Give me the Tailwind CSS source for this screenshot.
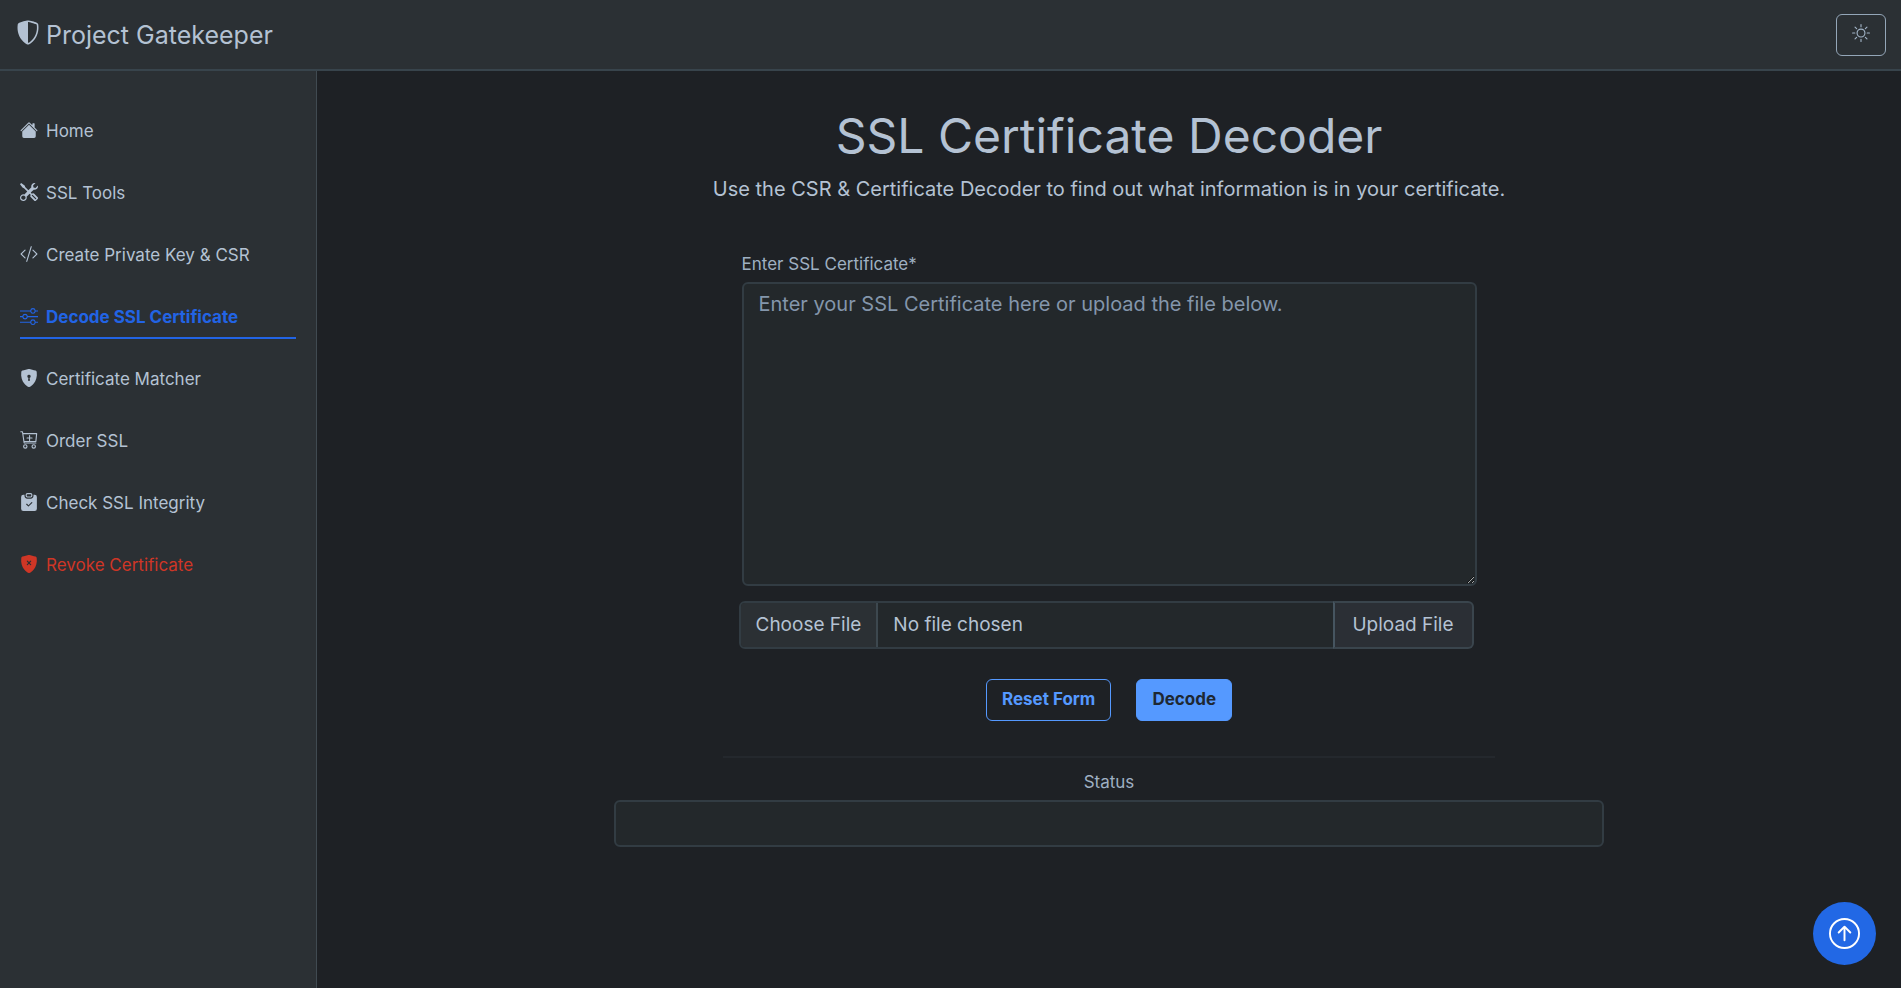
<!DOCTYPE html>
<html lang="en">
<head>
<meta charset="utf-8">
<meta name="viewport" content="width=device-width, initial-scale=1">
<title>Project Gatekeeper</title>
<script src="https://cdn.jsdelivr.net/npm/@tailwindcss/browser@4"></script>
</head>
<body class="flex min-h-screen flex-col bg-[#1e2125] font-['Inter',sans-serif] text-[#b4c2d3]">
<header class="flex h-[71px] items-center justify-between border-b-2 border-[#38444c] bg-[#2b3034] pr-[15px] pl-4">
  <a href="#" class="flex items-center gap-1.5 text-[25px] leading-8">
    <svg class="mb-1 h-[25px] w-6" viewBox="0 0 16 16" fill="currentColor"><path d="M8 14.933a.615.615 0 0 0 .1-.025c.076-.023.174-.061.294-.118.24-.113.547-.29.893-.533a10.726 10.726 0 0 0 2.287-2.233c1.527-1.997 2.807-5.031 2.253-9.188a.48.48 0 0 0-.328-.39c-.651-.213-1.75-.56-2.837-.855C9.552 1.29 8.531 1.067 8 1.067v13.866zM5.072.56C6.157.265 7.31 0 8 0s1.843.265 2.928.56c1.11.3 2.229.655 2.887.87a1.540 1.540 0 0 1 1.044 1.262c.596 4.477-.787 7.795-2.465 9.990a11.775 11.775 0 0 1-2.517 2.453 7.159 7.159 0 0 1-1.048.625c-.28.132-.581.24-.829.24s-.548-.108-.829-.24a7.158 7.158 0 0 1-1.048-.625 11.777 11.777 0 0 1-2.517-2.453C1.928 10.487.545 7.169 1.141 2.692A1.540 1.540 0 0 1 2.185 1.430 62.456 62.456 0 0 1 5.072.560z"/></svg>
    Project Gatekeeper
  </a>
  <button type="button" aria-label="Toggle theme" class="flex h-[42px] w-[50px] items-center justify-center rounded-md border border-[#94a6b8] pb-1 text-[#a3b5c8]">
    <svg class="size-[18px]" viewBox="0 0 16 16" fill="currentColor"><path d="M8 11a3 3 0 1 1 0-6 3 3 0 0 1 0 6zm0 1a4 4 0 1 0 0-8 4 4 0 0 0 0 8zM8 0a.5.5 0 0 1 .5.5v2a.5.5 0 0 1-1 0v-2A.5.5 0 0 1 8 0zm0 13a.5.5 0 0 1 .5.5v2a.5.5 0 0 1-1 0v-2A.5.5 0 0 1 8 13zm8-5a.5.5 0 0 1-.5.5h-2a.5.5 0 0 1 0-1h2a.5.5 0 0 1 .5.5zM3 8a.5.5 0 0 1-.5.5h-2a.5.5 0 0 1 0-1h2A.5.5 0 0 1 3 8zm10.657-5.657a.5.5 0 0 1 0 .707l-1.414 1.415a.5.5 0 1 1-.707-.708l1.414-1.414a.5.5 0 0 1 .707 0zm-9.193 9.193a.5.5 0 0 1 0 .707L3.050 13.657a.5.5 0 0 1-.707-.707l1.414-1.414a.5.5 0 0 1 .707 0zm9.193 2.121a.5.5 0 0 1-.707 0l-1.414-1.414a.5.5 0 0 1 .707-.707l1.414 1.414a.5.5 0 0 1 0 .707zM4.464 4.465a.5.5 0 0 1-.707 0L2.343 3.050a.5.5 0 1 1 .707-.707l1.414 1.414a.5.5 0 0 1 0 .708z"/></svg>
  </button>
</header>
<div class="flex flex-1">
  <nav class="flex w-[317px] shrink-0 flex-col gap-5 border-r border-[#404a51] bg-[#2b3034] px-5 pt-10 text-[17px] leading-6">
    <a href="#" class="flex h-[42px] items-center gap-2 border-b-2 border-transparent">
      <svg class="mb-0.5 size-[18px]" viewBox="0 0 16 16" fill="currentColor"><path d="M8.707 1.500a1 1 0 0 0-1.414 0L.646 8.146a.5.5 0 0 0 .708.708L8 2.207l6.646 6.647a.5.5 0 0 0 .708-.708L13 5.793V2.500a.5.5 0 0 0-.5-.5h-1a.5.5 0 0 0-.5.5v1.293L8.707 1.500Z"/><path d="m8 3.293 6 6V13.500a1.500 1.500 0 0 1-1.500 1.500h-9A1.500 1.500 0 0 1 2 13.500V9.293l6-6Z"/></svg>
      Home</a>
    <a href="#" class="flex h-[42px] items-center gap-2 border-b-2 border-transparent">
      <svg class="mb-0.5 size-[18px]" viewBox="0 0 16 16" fill="currentColor"><path d="M1 0 0 1l2.200 3.081a1 1 0 0 0 .815.419h.070a1 1 0 0 1 .708.293l2.675 2.675-2.617 2.654A3.003 3.003 0 0 0 0 13a3 3 0 1 0 5.878-.851l2.654-2.617.968.968-.305.914a1 1 0 0 0 .242 1.023l3.270 3.270a.997.997 0 0 0 1.414 0l1.586-1.586a.997.997 0 0 0 0-1.414l-3.270-3.270a1 1 0 0 0-1.023-.242L10.500 9.500l-.960-.960 2.680-2.643A3.005 3.005 0 0 0 16 3c0-.269-.035-.530-.102-.777l-2.140 2.141L12 4l-.364-1.757L13.777.102a3 3 0 0 0-3.675 3.680L7.462 6.460 4.793 3.793a1 1 0 0 1-.293-.707v-.071a1 1 0 0 0-.419-.814L1 0Zm9.646 10.646a.5.5 0 0 1 .708 0l2.914 2.915a.5.5 0 0 1-.707.707l-2.915-2.914a.5.5 0 0 1 0-.708ZM3 11l.471.242.529.026.287.445.445.287.026.529L5 13l-.242.471-.026.529-.445.287-.287.445-.529.026L3 15l-.471-.242L2 14.732l-.287-.445L1.268 14l-.026-.529L1 13l.242-.471.026-.529.445-.287.287-.445.529-.026L3 11Z"/></svg>
      SSL Tools</a>
    <a href="#" class="flex h-[42px] items-center gap-2 border-b-2 border-transparent">
      <svg class="mb-0.5 size-[18px]" viewBox="0 0 16 16" fill="currentColor"><path d="M10.478 1.647a.5.5 0 1 0-.956-.294l-4 13a.5.5 0 0 0 .956.294l4-13zM4.854 4.146a.5.5 0 0 1 0 .708L1.707 8l3.147 3.146a.5.5 0 0 1-.708.708l-3.500-3.500a.5.5 0 0 1 0-.708l3.500-3.500a.5.5 0 0 1 .708 0zm6.292 0a.5.5 0 0 0 0 .708L14.293 8l-3.147 3.146a.5.5 0 0 0 .708.708l3.500-3.500a.5.5 0 0 0 0-.708l-3.500-3.500a.5.5 0 0 0-.708 0z"/></svg>
      Create Private Key &amp; CSR</a>
    <a href="#" aria-current="page" class="flex h-[42px] items-center gap-2 border-b-2 border-[#2264e5] font-bold text-[#2264e5]">
      <svg class="mb-0.5 size-[18px]" viewBox="0 0 16 16" fill="currentColor"><path fill-rule="evenodd" d="M11.500 2a1.500 1.500 0 1 0 0 3 1.500 1.500 0 0 0 0-3zM9.050 3a2.500 2.500 0 0 1 4.900 0H16v1h-2.050a2.500 2.500 0 0 1-4.900 0H0V3h9.050zM4.500 7a1.500 1.500 0 1 0 0 3 1.500 1.500 0 0 0 0-3zM2.050 8a2.500 2.500 0 0 1 4.900 0H16v1H6.950a2.500 2.500 0 0 1-4.900 0H0V8h2.050zm9.450 4a1.500 1.500 0 1 0 0 3 1.500 1.500 0 0 0 0-3zm-2.450 1a2.500 2.500 0 0 1 4.900 0H16v1h-2.050a2.500 2.500 0 0 1-4.900 0H0v-1h9.050z"/></svg>
      Decode SSL Certificate</a>
    <a href="#" class="flex h-[42px] items-center gap-2 border-b-2 border-transparent">
      <svg class="mb-0.5 size-[18px]" viewBox="0 0 16 16" fill="currentColor"><path fill-rule="evenodd" d="M8 0c-.690 0-1.843.265-2.928.560-1.110.300-2.229.655-2.887.870a1.540 1.540 0 0 0-1.044 1.262c-.596 4.477.787 7.795 2.465 9.990a11.777 11.777 0 0 0 2.517 2.453c.386.273.744.482 1.048.625.280.132.581.240.829.240s.548-.108.829-.240a7.159 7.159 0 0 0 1.048-.625 11.775 11.775 0 0 0 2.517-2.453c1.678-2.195 3.061-5.513 2.465-9.990a1.541 1.541 0 0 0-1.044-1.263 62.467 62.467 0 0 0-2.887-.870C9.843.266 8.690 0 8 0zm0 5a1.500 1.500 0 0 1 .500 2.915l.385 1.990a.5.5 0 0 1-.491.595h-.788a.5.5 0 0 1-.490-.595l.384-1.990A1.500 1.500 0 0 1 8 5z"/></svg>
      Certificate Matcher</a>
    <a href="#" class="flex h-[42px] items-center gap-2 border-b-2 border-transparent">
      <svg class="mb-0.5 size-[18px]" viewBox="0 0 16 16" fill="none" stroke="currentColor" stroke-linecap="round" stroke-linejoin="round"><path d="M.7.7h1.500l1.500 10h10.400M2.500 2.300h12.300l-.700 7H3.500M8.500 4v4.400M6.300 6.200h4.400"/><circle cx="4.700" cy="13.700" r="1.500"/><circle cx="12.200" cy="13.700" r="1.500"/></svg>
      Order SSL</a>
    <a href="#" class="flex h-[42px] items-center gap-2 border-b-2 border-transparent">
      <svg class="mb-0.5 size-[18px]" viewBox="0 0 16 16" fill="currentColor"><path d="M6.500 0A1.500 1.500 0 0 0 5 1.500v1A1.500 1.500 0 0 0 6.500 4h3A1.500 1.500 0 0 0 11 2.500v-1A1.500 1.500 0 0 0 9.500 0h-3Zm3 1a.5.5 0 0 1 .5.5v1a.5.5 0 0 1-.5.5h-3a.5.5 0 0 1-.5-.5v-1a.5.5 0 0 1 .5-.5h3Z"/><path d="M4 1.500H3a2 2 0 0 0-2 2V14a2 2 0 0 0 2 2h10a2 2 0 0 0 2-2V3.500a2 2 0 0 0-2-2h-1v1A2.500 2.500 0 0 1 9.500 5h-3A2.500 2.500 0 0 1 4 2.500v-1Zm6.854 7.354-3 3a.5.5 0 0 1-.708 0l-1.500-1.500a.5.5 0 0 1 .708-.708L7.500 10.793l2.646-2.647a.5.5 0 0 1 .708.708Z"/></svg>
      Check SSL Integrity</a>
    <a href="#" class="flex h-[42px] items-center gap-2 border-b-2 border-transparent text-[#cf3626]">
      <svg class="mb-0.5 size-[18px]" viewBox="0 0 16 16" fill="currentColor"><path fill-rule="evenodd" d="M8 0c-.690 0-1.843.265-2.928.560-1.110.300-2.229.655-2.887.870a1.540 1.540 0 0 0-1.044 1.262c-.596 4.477.787 7.795 2.465 9.990a11.777 11.777 0 0 0 2.517 2.453c.386.273.744.482 1.048.625.280.132.581.240.829.240s.548-.108.829-.240a7.159 7.159 0 0 0 1.048-.625 11.775 11.775 0 0 0 2.517-2.453c1.678-2.195 3.061-5.513 2.465-9.990a1.541 1.541 0 0 0-1.044-1.263 62.467 62.467 0 0 0-2.887-.870C9.843.266 8.690 0 8 0zM6.854 5.146a.5.5 0 1 0-.708.708L7.293 7 6.146 8.146a.5.5 0 1 0 .708.708L8 7.707l1.146 1.147a.5.5 0 1 0 .708-.708L8.707 7l1.147-1.146a.5.5 0 0 0-.708-.708L8 6.293 6.854 5.146z"/></svg>
      Revoke Certificate</a>
  </nav>
  <main class="flex flex-1 flex-col items-center px-8 pt-9">
    <h1 class="text-5xl leading-[58px]">SSL Certificate Decoder</h1>
    <p class="mt-2 text-xl leading-8">Use the CSR &amp; Certificate Decoder to find out what information is in your certificate.</p>
    <form class="mt-[47px] flex w-full max-w-[772px] flex-col items-center">
      <div class="flex w-full max-w-[735px] flex-col">
        <label for="cert" class="text-[17px] leading-6 text-[#9fb0c2]">Enter SSL Certificate*</label>
        <textarea id="cert" placeholder="Enter your SSL Certificate here or upload the file below." class="mt-1.5 h-[304px] resize rounded-md border-2 border-[#323c43] bg-[#23282b] px-[15px] py-1.5 text-xl placeholder:text-[#8496ab]"></textarea>
        <div class="mt-[15px] mr-[3px] -ml-[3px] flex h-12">
          <input type="file" aria-label="Certificate file" class="h-12 min-w-0 flex-1 rounded-l-md border-2 border-[#323c43] bg-[#23282b] text-[19px] leading-[44px] file:mr-[15px] file:h-11 file:border-r-2 file:border-[#3d484f] file:bg-[#2b3034] file:px-[15px] file:text-[#b4c2d3]">
          <button type="button" class="-ml-[2px] w-[141px] rounded-r-md border-2 border-[#3a454d] border-l-[#465560] bg-[#2b2f35] text-[19px]">Upload File</button>
        </div>
      </div>
      <div class="mt-[30px] flex gap-[25px] text-[17px] font-bold">
        <button type="reset" class="h-[42px] rounded-md border border-[#5599ff] px-[15px] text-[#5599ff]">Reset Form</button>
        <button type="submit" class="h-[42px] rounded-md border border-[#5599ff] bg-[#5599ff] px-[15px] text-[#1e2833]">Decode</button>
      </div>
      <hr class="mt-[35px] w-full border-t-2 border-[#24282d]">
    </form>
    <label for="status" class="mt-3 text-[17px] leading-6 text-[#9fb0c2]">Status</label>
    <input id="status" type="text" readonly class="mt-1.5 h-[47px] w-full max-w-[990px] rounded-md border-2 border-[#323c43] bg-[#23282b] px-4 text-xl">
  </main>
</div>
<button type="button" aria-label="Back to top" class="fixed right-[25px] bottom-[23px] flex size-[63px] items-center justify-center rounded-full bg-[#2268e5] text-white">
  <svg class="size-[31px]" viewBox="0 0 16 16" fill="currentColor"><path fill-rule="evenodd" d="M1 8a7 7 0 1 0 14 0A7 7 0 0 0 1 8zm15 0A8 8 0 1 1 0 8a8 8 0 0 1 16 0zm-7.500 3.500a.5.5 0 0 1-1 0V5.707L5.354 7.854a.5.5 0 1 1-.708-.708l3-3a.5.5 0 0 1 .708 0l3 3a.5.5 0 0 1-.708.708L8.500 5.707V11.500z"/></svg>
</button>
</body>
</html>
